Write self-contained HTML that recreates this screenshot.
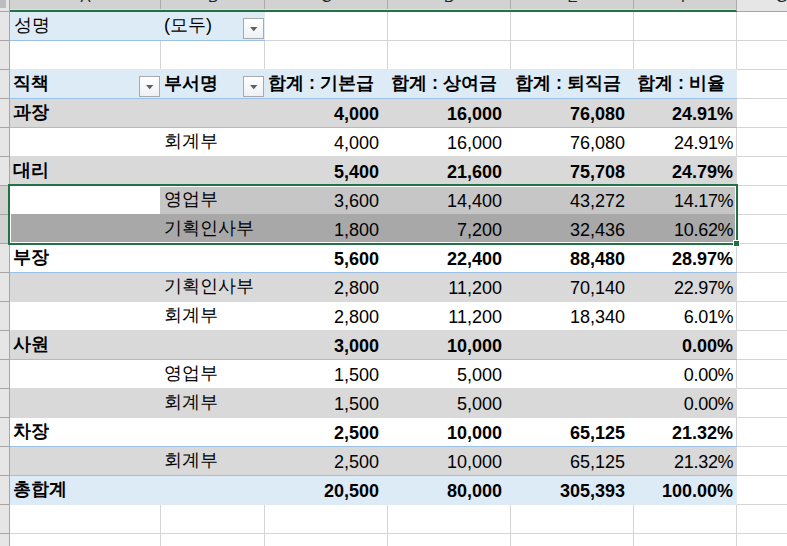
<!DOCTYPE html>
<html><head><meta charset="utf-8"><style>
html,body{margin:0;padding:0;}
body{width:787px;height:546px;position:relative;overflow:hidden;background:#fff;font-family:"Liberation Sans",sans-serif;}
body>div{position:absolute;}
.t{font-size:18px;line-height:24px;height:24px;white-space:nowrap;color:#000;}
.b{font-weight:bold;}
</style></head><body>
<div style="left:160px;top:12px;width:1px;height:534px;background:#d4d4d4;"></div>
<div style="left:264px;top:12px;width:1px;height:534px;background:#d4d4d4;"></div>
<div style="left:387px;top:12px;width:1px;height:534px;background:#d4d4d4;"></div>
<div style="left:510px;top:12px;width:1px;height:534px;background:#d4d4d4;"></div>
<div style="left:633px;top:12px;width:1px;height:534px;background:#d4d4d4;"></div>
<div style="left:736px;top:12px;width:1px;height:534px;background:#d4d4d4;"></div>
<div style="left:10px;top:40px;width:777px;height:1px;background:#d4d4d4;"></div>
<div style="left:10px;top:69px;width:777px;height:1px;background:#d4d4d4;"></div>
<div style="left:10px;top:98px;width:777px;height:1px;background:#d4d4d4;"></div>
<div style="left:10px;top:127px;width:777px;height:1px;background:#d4d4d4;"></div>
<div style="left:10px;top:156px;width:777px;height:1px;background:#d4d4d4;"></div>
<div style="left:10px;top:185px;width:777px;height:1px;background:#d4d4d4;"></div>
<div style="left:10px;top:214px;width:777px;height:1px;background:#d4d4d4;"></div>
<div style="left:10px;top:243px;width:777px;height:1px;background:#d4d4d4;"></div>
<div style="left:10px;top:272px;width:777px;height:1px;background:#d4d4d4;"></div>
<div style="left:10px;top:301px;width:777px;height:1px;background:#d4d4d4;"></div>
<div style="left:10px;top:330px;width:777px;height:1px;background:#d4d4d4;"></div>
<div style="left:10px;top:359px;width:777px;height:1px;background:#d4d4d4;"></div>
<div style="left:10px;top:388px;width:777px;height:1px;background:#d4d4d4;"></div>
<div style="left:10px;top:417px;width:777px;height:1px;background:#d4d4d4;"></div>
<div style="left:10px;top:446px;width:777px;height:1px;background:#d4d4d4;"></div>
<div style="left:10px;top:475px;width:777px;height:1px;background:#d4d4d4;"></div>
<div style="left:10px;top:504px;width:777px;height:1px;background:#d4d4d4;"></div>
<div style="left:10px;top:533px;width:777px;height:1px;background:#d4d4d4;"></div>
<div style="left:10px;top:12px;width:255px;height:29px;background:#ddebf7;"></div>
<div style="left:10px;top:40px;width:255px;height:1px;background:#9bc2e6;"></div>
<div style="left:10px;top:69px;width:726px;height:436px;background:#ffffff;"></div>
<div style="left:10px;top:69px;width:727px;height:30px;background:#ddebf7;"></div>
<div style="left:10px;top:98px;width:727px;height:30px;background:#d9d9d9;"></div>
<div style="left:10px;top:156px;width:727px;height:30px;background:#d9d9d9;"></div>
<div style="left:10px;top:214px;width:727px;height:30px;background:#d9d9d9;"></div>
<div style="left:10px;top:272px;width:727px;height:30px;background:#d9d9d9;"></div>
<div style="left:10px;top:330px;width:727px;height:30px;background:#d9d9d9;"></div>
<div style="left:10px;top:388px;width:727px;height:30px;background:#d9d9d9;"></div>
<div style="left:10px;top:446px;width:727px;height:30px;background:#d9d9d9;"></div>
<div style="left:10px;top:476px;width:727px;height:29px;background:#ddebf7;"></div>
<div style="left:10px;top:98px;width:727px;height:1px;background:#9bc2e6;"></div>
<div style="left:10px;top:127px;width:727px;height:1px;background:#9bc2e6;"></div>
<div style="left:10px;top:185px;width:727px;height:1px;background:#9bc2e6;"></div>
<div style="left:10px;top:272px;width:727px;height:1px;background:#9bc2e6;"></div>
<div style="left:10px;top:359px;width:727px;height:1px;background:#9bc2e6;"></div>
<div style="left:10px;top:446px;width:727px;height:1px;background:#9bc2e6;"></div>
<div style="left:10px;top:475px;width:727px;height:1px;background:#9bc2e6;"></div>
<div style="left:160px;top:187px;width:576px;height:27px;background:#c6c6c6;"></div>
<div style="left:11px;top:214px;width:725px;height:28px;background:#a8a8a8;"></div>
<div style="left:0px;top:0px;width:10px;height:12px;background:#e6e6e6;"></div>
<div style="left:0px;top:0px;width:6px;height:8px;background:#bdbdbd;"></div>
<div style="left:10px;top:0px;width:727px;height:9px;background:#d2d2d2;"></div>
<div style="left:10px;top:9px;width:727px;height:1px;background:#e2dede;"></div>
<div style="left:10px;top:10px;width:727px;height:2px;background:#217346;"></div>
<div style="left:737px;top:0px;width:50px;height:11px;background:#e6e6e6;"></div>
<div style="left:737px;top:11px;width:50px;height:1px;background:#a6a6a6;"></div>
<div style="left:160px;top:0px;width:1px;height:9px;background:#ababab;"></div>
<div style="left:264px;top:0px;width:1px;height:9px;background:#ababab;"></div>
<div style="left:387px;top:0px;width:1px;height:9px;background:#ababab;"></div>
<div style="left:510px;top:0px;width:1px;height:9px;background:#ababab;"></div>
<div style="left:633px;top:0px;width:1px;height:9px;background:#ababab;"></div>
<div style="left:736px;top:0px;width:1px;height:11px;background:#ababab;"></div>
<div style="left:0px;top:12px;width:9px;height:534px;background:#e6e6e6;"></div>
<div style="left:0px;top:186px;width:8px;height:58px;background:#d2d2d2;"></div>
<div style="left:9px;top:0px;width:1px;height:546px;background:#a6a6a6;"></div>
<div style="left:0px;top:11px;width:9px;height:1px;background:#a6a6a6;"></div>
<div style="left:0px;top:40px;width:9px;height:1px;background:#a6a6a6;"></div>
<div style="left:0px;top:69px;width:9px;height:1px;background:#a6a6a6;"></div>
<div style="left:0px;top:98px;width:9px;height:1px;background:#a6a6a6;"></div>
<div style="left:0px;top:127px;width:9px;height:1px;background:#a6a6a6;"></div>
<div style="left:0px;top:156px;width:9px;height:1px;background:#a6a6a6;"></div>
<div style="left:0px;top:185px;width:9px;height:1px;background:#a6a6a6;"></div>
<div style="left:0px;top:214px;width:9px;height:1px;background:#a6a6a6;"></div>
<div style="left:0px;top:243px;width:9px;height:1px;background:#a6a6a6;"></div>
<div style="left:0px;top:272px;width:9px;height:1px;background:#a6a6a6;"></div>
<div style="left:0px;top:301px;width:9px;height:1px;background:#a6a6a6;"></div>
<div style="left:0px;top:330px;width:9px;height:1px;background:#a6a6a6;"></div>
<div style="left:0px;top:359px;width:9px;height:1px;background:#a6a6a6;"></div>
<div style="left:0px;top:388px;width:9px;height:1px;background:#a6a6a6;"></div>
<div style="left:0px;top:417px;width:9px;height:1px;background:#a6a6a6;"></div>
<div style="left:0px;top:446px;width:9px;height:1px;background:#a6a6a6;"></div>
<div style="left:0px;top:475px;width:9px;height:1px;background:#a6a6a6;"></div>
<div style="left:0px;top:504px;width:9px;height:1px;background:#a6a6a6;"></div>
<div style="left:0px;top:533px;width:9px;height:1px;background:#a6a6a6;"></div>
<div style="left:8px;top:184px;width:730px;height:2px;background:#217346;"></div>
<div style="left:8px;top:184px;width:2px;height:61px;background:#217346;"></div>
<div style="left:8px;top:243px;width:725px;height:2px;background:#217346;"></div>
<div style="left:736px;top:184px;width:2px;height:56px;background:#217346;"></div>
<div style="left:10px;top:186px;width:726px;height:1px;background:#ffffff;"></div>
<div style="left:10px;top:242px;width:726px;height:1px;background:#ffffff;"></div>
<div style="left:10px;top:186px;width:1px;height:57px;background:#ffffff;"></div>
<div style="left:735px;top:186px;width:1px;height:57px;background:#ffffff;"></div>
<div style="left:733px;top:240px;width:7px;height:7px;background:#ffffff;"></div>
<div style="left:734px;top:241px;width:5px;height:5px;background:#217346;"></div>
<div class="t" style="left:65.5px;top:-15px;width:40px;text-align:center;font-size:15px;color:#222">A</div>
<div class="t" style="left:193.0px;top:-15px;width:40px;text-align:center;font-size:15px;color:#222">B</div>
<div class="t" style="left:306.5px;top:-15px;width:40px;text-align:center;font-size:15px;color:#222">C</div>
<div class="t" style="left:429.5px;top:-15px;width:40px;text-align:center;font-size:15px;color:#222">D</div>
<div class="t" style="left:552.5px;top:-15px;width:40px;text-align:center;font-size:15px;color:#222">E</div>
<div class="t" style="left:665.5px;top:-15px;width:40px;text-align:center;font-size:15px;color:#222">F</div>
<div class="t" style="left:761.5px;top:-15px;width:40px;text-align:center;font-size:15px;color:#222">G</div>
<div style="left:243px;top:18px;width:19px;height:19px;border:1px solid #a6a9ad;background:linear-gradient(#ffffff,#eff0f4)"></div>
<svg style="position:absolute;left:250px;top:27px" width="8" height="5"><polygon points="0,0 7.4,0 3.7,4.3" fill="#5f5f5f"/></svg>
<div style="left:139px;top:76px;width:19px;height:19px;border:1px solid #a6a9ad;background:linear-gradient(#ffffff,#eff0f4)"></div>
<svg style="position:absolute;left:146px;top:85px" width="8" height="5"><polygon points="0,0 7.4,0 3.7,4.3" fill="#5f5f5f"/></svg>
<div style="left:243px;top:76px;width:19px;height:19px;border:1px solid #a6a9ad;background:linear-gradient(#ffffff,#eff0f4)"></div>
<svg style="position:absolute;left:250px;top:85px" width="8" height="5"><polygon points="0,0 7.4,0 3.7,4.3" fill="#5f5f5f"/></svg>
<div class="t" style="left:10px;top:13px;width:150px;text-align:left;padding-left:4px;box-sizing:border-box;">성명</div>
<div class="t" style="left:161px;top:13px;width:103px;text-align:left;padding-left:3px;box-sizing:border-box;">(모두)</div>
<div class="t b" style="left:10px;top:71px;width:150px;text-align:left;padding-left:3px;box-sizing:border-box;">직책</div>
<div class="t b" style="left:161px;top:71px;width:103px;text-align:left;padding-left:3px;box-sizing:border-box;">부서명</div>
<div class="t b" style="left:265px;top:71px;width:122px;text-align:left;padding-left:3px;box-sizing:border-box;">합계 : 기본급</div>
<div class="t b" style="left:388px;top:71px;width:122px;text-align:left;padding-left:3px;box-sizing:border-box;">합계 : 상여금</div>
<div class="t b" style="left:511px;top:71px;width:122px;text-align:left;padding-left:4px;box-sizing:border-box;">합계 : 퇴직금</div>
<div class="t b" style="left:634px;top:71px;width:102px;text-align:left;padding-left:3px;box-sizing:border-box;">합계 : 비율</div>
<div class="t b" style="left:10px;top:100px;width:150px;text-align:left;padding-left:3px;box-sizing:border-box;">과장</div>
<div class="t b" style="left:265px;top:102px;width:122px;text-align:right;padding-right:8px;box-sizing:border-box;">4,000</div>
<div class="t b" style="left:388px;top:102px;width:122px;text-align:right;padding-right:8px;box-sizing:border-box;">16,000</div>
<div class="t b" style="left:511px;top:102px;width:122px;text-align:right;padding-right:8px;box-sizing:border-box;">76,080</div>
<div class="t b" style="left:634px;top:102px;width:102px;text-align:right;padding-right:3px;box-sizing:border-box;">24.91%</div>
<div class="t" style="left:161px;top:129px;width:103px;text-align:left;padding-left:3px;box-sizing:border-box;">회계부</div>
<div class="t" style="left:265px;top:131px;width:122px;text-align:right;padding-right:8px;box-sizing:border-box;">4,000</div>
<div class="t" style="left:388px;top:131px;width:122px;text-align:right;padding-right:8px;box-sizing:border-box;">16,000</div>
<div class="t" style="left:511px;top:131px;width:122px;text-align:right;padding-right:8px;box-sizing:border-box;">76,080</div>
<div class="t" style="left:634px;top:131px;width:102px;text-align:right;padding-right:2.7px;box-sizing:border-box;letter-spacing:-0.3px;">24.91%</div>
<div class="t b" style="left:10px;top:158px;width:150px;text-align:left;padding-left:3px;box-sizing:border-box;">대리</div>
<div class="t b" style="left:265px;top:160px;width:122px;text-align:right;padding-right:8px;box-sizing:border-box;">5,400</div>
<div class="t b" style="left:388px;top:160px;width:122px;text-align:right;padding-right:8px;box-sizing:border-box;">21,600</div>
<div class="t b" style="left:511px;top:160px;width:122px;text-align:right;padding-right:8px;box-sizing:border-box;">75,708</div>
<div class="t b" style="left:634px;top:160px;width:102px;text-align:right;padding-right:3px;box-sizing:border-box;">24.79%</div>
<div class="t" style="left:161px;top:187px;width:103px;text-align:left;padding-left:3px;box-sizing:border-box;">영업부</div>
<div class="t" style="left:265px;top:189px;width:122px;text-align:right;padding-right:8px;box-sizing:border-box;">3,600</div>
<div class="t" style="left:388px;top:189px;width:122px;text-align:right;padding-right:8px;box-sizing:border-box;">14,400</div>
<div class="t" style="left:511px;top:189px;width:122px;text-align:right;padding-right:8px;box-sizing:border-box;">43,272</div>
<div class="t" style="left:634px;top:189px;width:102px;text-align:right;padding-right:2.7px;box-sizing:border-box;letter-spacing:-0.3px;">14.17%</div>
<div class="t" style="left:161px;top:216px;width:103px;text-align:left;padding-left:3px;box-sizing:border-box;">기획인사부</div>
<div class="t" style="left:265px;top:218px;width:122px;text-align:right;padding-right:8px;box-sizing:border-box;">1,800</div>
<div class="t" style="left:388px;top:218px;width:122px;text-align:right;padding-right:8px;box-sizing:border-box;">7,200</div>
<div class="t" style="left:511px;top:218px;width:122px;text-align:right;padding-right:8px;box-sizing:border-box;">32,436</div>
<div class="t" style="left:634px;top:218px;width:102px;text-align:right;padding-right:2.7px;box-sizing:border-box;letter-spacing:-0.3px;">10.62%</div>
<div class="t b" style="left:10px;top:245px;width:150px;text-align:left;padding-left:3px;box-sizing:border-box;">부장</div>
<div class="t b" style="left:265px;top:247px;width:122px;text-align:right;padding-right:8px;box-sizing:border-box;">5,600</div>
<div class="t b" style="left:388px;top:247px;width:122px;text-align:right;padding-right:8px;box-sizing:border-box;">22,400</div>
<div class="t b" style="left:511px;top:247px;width:122px;text-align:right;padding-right:8px;box-sizing:border-box;">88,480</div>
<div class="t b" style="left:634px;top:247px;width:102px;text-align:right;padding-right:3px;box-sizing:border-box;">28.97%</div>
<div class="t" style="left:161px;top:274px;width:103px;text-align:left;padding-left:3px;box-sizing:border-box;">기획인사부</div>
<div class="t" style="left:265px;top:276px;width:122px;text-align:right;padding-right:8px;box-sizing:border-box;">2,800</div>
<div class="t" style="left:388px;top:276px;width:122px;text-align:right;padding-right:8px;box-sizing:border-box;">11,200</div>
<div class="t" style="left:511px;top:276px;width:122px;text-align:right;padding-right:8px;box-sizing:border-box;">70,140</div>
<div class="t" style="left:634px;top:276px;width:102px;text-align:right;padding-right:2.7px;box-sizing:border-box;letter-spacing:-0.3px;">22.97%</div>
<div class="t" style="left:161px;top:303px;width:103px;text-align:left;padding-left:3px;box-sizing:border-box;">회계부</div>
<div class="t" style="left:265px;top:305px;width:122px;text-align:right;padding-right:8px;box-sizing:border-box;">2,800</div>
<div class="t" style="left:388px;top:305px;width:122px;text-align:right;padding-right:8px;box-sizing:border-box;">11,200</div>
<div class="t" style="left:511px;top:305px;width:122px;text-align:right;padding-right:8px;box-sizing:border-box;">18,340</div>
<div class="t" style="left:634px;top:305px;width:102px;text-align:right;padding-right:2.7px;box-sizing:border-box;letter-spacing:-0.3px;">6.01%</div>
<div class="t b" style="left:10px;top:332px;width:150px;text-align:left;padding-left:3px;box-sizing:border-box;">사원</div>
<div class="t b" style="left:265px;top:334px;width:122px;text-align:right;padding-right:8px;box-sizing:border-box;">3,000</div>
<div class="t b" style="left:388px;top:334px;width:122px;text-align:right;padding-right:8px;box-sizing:border-box;">10,000</div>
<div class="t b" style="left:634px;top:334px;width:102px;text-align:right;padding-right:3px;box-sizing:border-box;">0.00%</div>
<div class="t" style="left:161px;top:361px;width:103px;text-align:left;padding-left:3px;box-sizing:border-box;">영업부</div>
<div class="t" style="left:265px;top:363px;width:122px;text-align:right;padding-right:8px;box-sizing:border-box;">1,500</div>
<div class="t" style="left:388px;top:363px;width:122px;text-align:right;padding-right:8px;box-sizing:border-box;">5,000</div>
<div class="t" style="left:634px;top:363px;width:102px;text-align:right;padding-right:2.7px;box-sizing:border-box;letter-spacing:-0.3px;">0.00%</div>
<div class="t" style="left:161px;top:390px;width:103px;text-align:left;padding-left:3px;box-sizing:border-box;">회계부</div>
<div class="t" style="left:265px;top:392px;width:122px;text-align:right;padding-right:8px;box-sizing:border-box;">1,500</div>
<div class="t" style="left:388px;top:392px;width:122px;text-align:right;padding-right:8px;box-sizing:border-box;">5,000</div>
<div class="t" style="left:634px;top:392px;width:102px;text-align:right;padding-right:2.7px;box-sizing:border-box;letter-spacing:-0.3px;">0.00%</div>
<div class="t b" style="left:10px;top:419px;width:150px;text-align:left;padding-left:3px;box-sizing:border-box;">차장</div>
<div class="t b" style="left:265px;top:421px;width:122px;text-align:right;padding-right:8px;box-sizing:border-box;">2,500</div>
<div class="t b" style="left:388px;top:421px;width:122px;text-align:right;padding-right:8px;box-sizing:border-box;">10,000</div>
<div class="t b" style="left:511px;top:421px;width:122px;text-align:right;padding-right:8px;box-sizing:border-box;">65,125</div>
<div class="t b" style="left:634px;top:421px;width:102px;text-align:right;padding-right:3px;box-sizing:border-box;">21.32%</div>
<div class="t" style="left:161px;top:448px;width:103px;text-align:left;padding-left:3px;box-sizing:border-box;">회계부</div>
<div class="t" style="left:265px;top:450px;width:122px;text-align:right;padding-right:8px;box-sizing:border-box;">2,500</div>
<div class="t" style="left:388px;top:450px;width:122px;text-align:right;padding-right:8px;box-sizing:border-box;">10,000</div>
<div class="t" style="left:511px;top:450px;width:122px;text-align:right;padding-right:8px;box-sizing:border-box;">65,125</div>
<div class="t" style="left:634px;top:450px;width:102px;text-align:right;padding-right:2.7px;box-sizing:border-box;letter-spacing:-0.3px;">21.32%</div>
<div class="t b" style="left:10px;top:477px;width:150px;text-align:left;padding-left:3px;box-sizing:border-box;">총합계</div>
<div class="t b" style="left:265px;top:479px;width:122px;text-align:right;padding-right:8px;box-sizing:border-box;">20,500</div>
<div class="t b" style="left:388px;top:479px;width:122px;text-align:right;padding-right:8px;box-sizing:border-box;">80,000</div>
<div class="t b" style="left:511px;top:479px;width:122px;text-align:right;padding-right:8px;box-sizing:border-box;">305,393</div>
<div class="t b" style="left:634px;top:479px;width:102px;text-align:right;padding-right:3px;box-sizing:border-box;">100.00%</div>
</body></html>
